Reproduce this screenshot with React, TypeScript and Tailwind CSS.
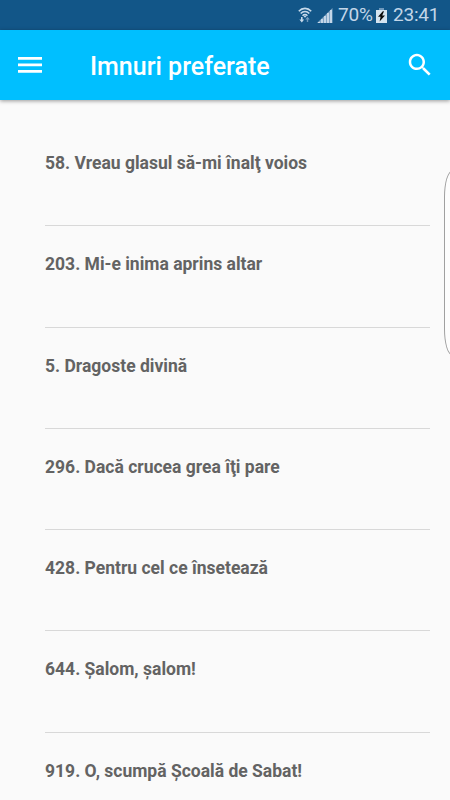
interface Hymn {
  number: number;
  title: string;
}

const hymns: Hymn[] = [
  { number: 58, title: "Vreau glasul să-mi înalţ voios" },
  { number: 203, title: "Mi-e inima aprins altar" },
  { number: 5, title: "Dragoste divină" },
  { number: 296, title: "Dacă crucea grea îţi pare" },
  { number: 428, title: "Pentru cel ce însetează" },
  { number: 644, title: "Șalom, șalom!" },
  { number: 919, title: "O, scumpă Școală de Sabat!" },
];

function WifiIcon() {
  return (
    <svg width="14" height="16" viewBox="0 0 14 16" fill="none" stroke="#c6d9ea" strokeWidth="1.6">
      <path d="M0.8 4.2C4.2 0.4 9.8 0.4 13.2 4.2" />
      <path d="M2.7 6.5C5.1 3.8 8.9 3.8 11.3 6.5" />
      <path d="M4.6 8.7C6 7.1 8 7.1 9.4 8.7" />
      <path d="M5.6 9.2L7 8.2L8.4 9.2L7 10.8z" fill="#c6d9ea" stroke="none" />
      <path d="M3 10h1.6v2.4h1.6L3.8 15.4L1.4 12.4H3z" fill="#c6d9ea" stroke="none" />
      <path d="M8.8 15h1.4v-2.6h1.6L9.5 9.8L7.2 12.4h1.6z" fill="#6f99bd" stroke="none" />
    </svg>
  );
}

function SignalIcon() {
  return (
    <svg width="16" height="15" viewBox="0 0 16 15" fill="#c3d6e8">
      <path d="M0 15L15.5 0V15z" fill="#7fa5c6" />
      <path d="M1 14h2v1H1zM4 11h2v4H4zM7 8h2v7H7zM10 5h2v10h-2zM13 2h2v13h-2z" />
    </svg>
  );
}

function BatteryIcon() {
  return (
    <svg width="11" height="15" viewBox="0 0 11 15">
      <path d="M3 0h5v2H3z" fill="#6f99bd" />
      <path d="M0 2h11v13H0z" fill="#d5e4f0" />
      <path d="M6.8 3.2L2 8.8h2.6L3.6 13.4L9 7.6H6.2L8 3.2z" fill="#0c0c0c" />
    </svg>
  );
}

function StatusBar() {
  return (
    <div className="flex h-[30px] items-center bg-[#125688] pl-[298px] text-[19px] leading-[30px] text-[#c3d6e8]">
      <WifiIcon />
      <div className="ml-[5px]">
        <SignalIcon />
      </div>
      <span className="ml-[5px] w-[38px] whitespace-nowrap tracking-[-0.2px]">70%</span>
      <BatteryIcon />
      <span className="ml-[6px] whitespace-nowrap tracking-[-0.2px]">23:41</span>
    </div>
  );
}

function AppBar() {
  return (
    <header className="relative flex h-[70px] items-center bg-[#00bfff] pr-[15px] pl-[18px] text-white shadow-[0_1px_4px_rgba(0,0,0,0.4)]">
      <button type="button" aria-label="Meniu">
        <svg width="24" height="18" viewBox="0 0 24 18" fill="currentColor">
          <path d="M0 1h24v2.7H0zM0 7.5h24v2.7H0zM0 14h24v2.7H0z" />
        </svg>
      </button>
      <h1 className="ml-[48px] flex-1 pt-[3px] text-[25px] leading-[30px] font-medium whitespace-nowrap">
        Imnuri preferate
      </h1>
      <button type="button" aria-label="Caută">
        <svg width="30" height="30" viewBox="0 0 24 24" fill="currentColor">
          <path d="M15.5 14h-.79l-.28-.27C15.41 12.59 16 11.11 16 9.5 16 5.91 13.09 3 9.5 3S3 5.91 3 9.5 5.91 16 9.5 16c1.61 0 3.09-.59 4.23-1.57l.27.28v.79l5 4.99L20.49 19l-4.99-5zm-6 0C7.01 14 5 11.99 5 9.5S7.01 5 9.5 5 14 7.01 14 9.5 11.99 14 9.5 14z" />
        </svg>
      </button>
    </header>
  );
}

export default function App() {
  return (
    <div className="relative h-[800px] w-[450px] overflow-hidden bg-[#fafafa] font-['Roboto',sans-serif]">
      <StatusBar />
      <AppBar />
      <ul className="pt-[25px] pr-5 pl-[45px]">
        {hymns.map((hymn) => (
          <li
            key={hymn.number}
            className="h-[101.25px] border-b border-[#d8d8d8] pt-[26px] text-[17.5px] leading-6 font-bold whitespace-nowrap text-[#636363]"
          >
            {hymn.number}. {hymn.title}
          </li>
        ))}
      </ul>

      {/* edge panel handle */}
      <div className="absolute top-[171px] left-[444px] h-[184px] w-[18px] rounded-[8px/26px] border border-[#a0a0a0] bg-[#fdfdfd]" />
    </div>
  );
}
